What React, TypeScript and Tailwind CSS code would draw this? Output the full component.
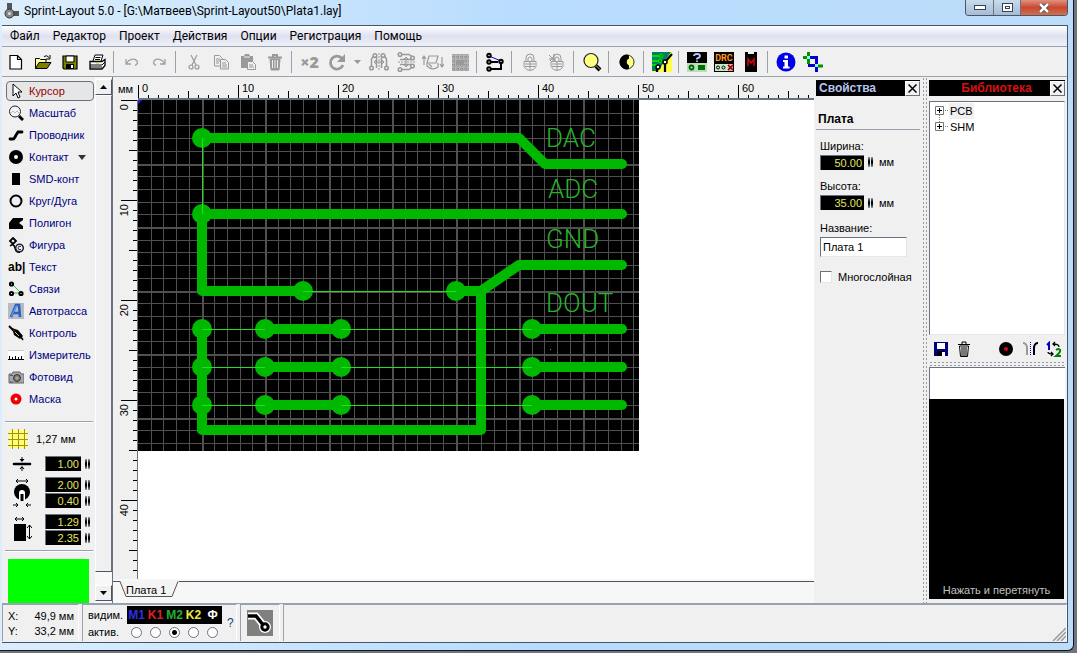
import { useState } from 'react'
import type { ReactNode } from 'react'

const MENU = ['Файл', 'Редактор', 'Проект', 'Действия', 'Опции', 'Регистрация', 'Помощь']

// Board geometry, 10px per millimetre
const GRID = 12.7
const BOARD_W = 501
const BOARD_H = 351

function Icon({ children, size = 22 }: { children: ReactNode; size?: number }) {
  return (
    <svg width={size} height={size} viewBox={`0 0 ${size} ${size}`} fill="none" className="block shrink-0" aria-hidden="true">
      {children}
    </svg>
  )
}

const mirrorPads = (
  <g stroke="#999">
    <path d="M3.500 15V8l2-3M8.500 5v12M18.500 15V8l-2-3M13.500 5v12" strokeWidth="1.500" />
    <path d="M11 2v18" strokeDasharray="2 1" />
    <path d="M7 11h8M8 9l-2 2 2 2M14 9l2 2-2 2" />
    <g strokeWidth="1.500" fill="#f0f0f0">
      <circle cx="7" cy="4.500" r="1.800" />
      <circle cx="15" cy="4.500" r="1.800" />
      <circle cx="3.500" cy="17" r="1.800" />
      <circle cx="18.500" cy="17" r="1.800" />
    </g>
  </g>
)

const lockShape = (
  <>
    <path d="M7 11V7a4 4 0 0 1 8 0v4M9 11V8a2 2 0 0 1 4 0v3" stroke="#999" />
    <path d="M5 10.500h12v5q-2 4-6 4t-6-4z" stroke="#999" />
    <path d="M6 13h10M6 15.500h10M11 11v8" stroke="#999" />
  </>
)

const ICONS: Record<string, ReactNode> = {
  new: <path d="M5 4.500h7.500l4 4v9.500H5z M12.500 4.500v4h4" fill="#fff" stroke="#000" strokeWidth="1.200" />,
  open: (
    <>
      <path d="M3.500 17.500v-10h4l1 1h5.500v3" fill="#ffff99" stroke="#000" />
      <path d="M3.500 17.500l3.500-6h12l-4 6z" fill="#808000" stroke="#000" />
      <path d="M12 5.500q3-2 5 1M18 4v4h-4" stroke="#000" />
    </>
  ),
  save: (
    <>
      <path d="M4 5h14v13H5l-1-1z" fill="#808000" stroke="#000" strokeWidth="1.200" />
      <path d="M7 5h8v6H7z" fill="#fff" stroke="#000" />
      <path d="M7 13h8v5H7z" fill="#000" />
      <path d="M12 14h2v3h-2z" fill="#fff" />
    </>
  ),
  print: (
    <>
      <path d="M7 10l2-6h8l-2 6" fill="#fff" stroke="#000" />
      <path d="M9.500 6.500h5M9 8.500h5" stroke="#000" />
      <path d="M4 10.500h12l3-2v6l-3 3.500H4z" fill="#fff" stroke="#000" strokeWidth="1.300" />
      <path d="M4 14h12l3-3M4 16h12" stroke="#000" />
      <path d="M10 12h3" stroke="#d0c000" />
    </>
  ),
  undo: <path d="M5 8v5h5M5.500 12.500c2-4 8-6 10.500-2.500c1 2 0 3.500-2 4.500" stroke="#a0a0a0" strokeWidth="1.300" />,
  redo: <path d="M17 8v5h-5M16.500 12.500c-2-4-8-6-10.500-2.500c-1 2 0 3.500 2 4.500" stroke="#a0a0a0" strokeWidth="1.300" />,
  cut: (
    <g stroke="#999" strokeWidth="1.200">
      <path d="M8 4l5 10M14 4L9 14" />
      <circle cx="8" cy="16" r="2" />
      <circle cx="14" cy="16" r="2" />
    </g>
  ),
  copy: (
    <g stroke="#999">
      <path d="M4.500 4.500h5l3 3v7.500h-8z" />
      <path d="M10.500 8.500h5l3 3v6.500h-8z" fill="#f0f0f0" />
      <path d="M6 8h4M6 10h4M6 12h3M12 12h4M12 14h5M12 16h5" />
    </g>
  ),
  paste: (
    <>
      <path d="M4 5h3l1-2h4l1 2h3v12H4z" fill="#999" />
      <path d="M7 6h6" stroke="#f0f0f0" />
      <path d="M10.500 10.500h5l3 3v5h-8z" fill="#f0f0f0" stroke="#999" />
      <path d="M12 14h4M12 16h5" stroke="#999" />
    </>
  ),
  trash: (
    <g stroke="#999">
      <path d="M4 6.500h14M9 6V4h4v2" strokeWidth="2" />
      <path d="M6 8h10l-1 11H7z" fill="#999" />
      <path d="M8.500 9v8M11 9v8M13.500 9v8" stroke="#eee" />
    </g>
  ),
  rotate: (
    <>
      <path d="M16 7.500A6.500 6.500 0 1 0 17 14" stroke="#999" strokeWidth="2.800" />
      <path d="M19 3v8h-8z" fill="#999" />
    </>
  ),
  mirrorH: mirrorPads,
  mirrorV: <g transform="rotate(90 11 11)">{mirrorPads}</g>,
  flip: (
    <g stroke="#999" strokeWidth="1.200">
      <path d="M7 5h9l-2 7H5zM5 12v3q5 5 11 1v-4" />
      <path d="M2 14V5M0 8l2-3 2 3M20 6v9M18 13l2 3 2-3M7 13l3 3" />
    </g>
  ),
  ground: (
    <>
      <path d="M3 3h17v17H3z" fill="#b4b4b4" />
      <path d="M5 3v17M9 3v17M13 3v17M17 3v17M3 6h17M3 10h17M3 14h17M3 18h17" stroke="#858585" strokeDasharray="1 1" />
      <path d="M7 9h8v5H7z" fill="#999" />
    </>
  ),
  nodes: (
    <>
      <path d="M5 5l12 5" stroke="#0000d0" />
      <path d="M5 11h9M17 10v8H7" stroke="#000" strokeWidth="2" />
      <g fill="#fff" stroke="#000" strokeWidth="2">
        <circle cx="5" cy="4.500" r="1.700" />
        <circle cx="5" cy="11" r="1.700" />
        <circle cx="5" cy="18" r="1.700" />
        <circle cx="17" cy="10.500" r="1.700" />
      </g>
    </>
  ),
  lock: lockShape,
  unlock: (
    <>
      {lockShape}
      <path d="M3 4l6 6M8 3v6M3 8h6M9 4L4 10" stroke="#999" />
    </>
  ),
  search: (
    <>
      <circle cx="10" cy="9.500" r="7" fill="#ffff80" stroke="#222" strokeWidth="1.200" />
      <path d="M15 15l4 4" stroke="#000" strokeWidth="4" />
      <path d="M15.500 15l3.500 3.500" stroke="#b0b070" />
    </>
  ),
  contrast: (
    <>
      <circle cx="11" cy="11" r="7" fill="#ffff80" stroke="#333" />
      <path d="M11 3.500a7.500 7.500 0 0 0 0 15l2-1v-3a3.800 3.800 0 0 1 0-7v-3z" fill="#000" />
    </>
  ),
  photo: (
    <>
      <path d="M1 1h20v20H1z" fill="#ffff40" />
      <path d="M1 1h19L7 20H1z" fill="#008060" />
      <path d="M1 5h8M1 10h8M1 14h5" stroke="#00e000" strokeWidth="2" />
      <circle cx="10" cy="5" r="1.800" fill="#00a000" stroke="#00e000" />
      <circle cx="9" cy="10" r="1.800" fill="#00a000" stroke="#00e000" />
      <path d="M21 3l-7 8v10M6 21v-4" stroke="#000" strokeWidth="2.200" />
      <circle cx="7" cy="16" r="2" fill="#fff" stroke="#000" strokeWidth="1.500" />
      <circle cx="14" cy="11" r="2" fill="#fff" stroke="#000" strokeWidth="1.500" />
    </>
  ),
  help: (
    <>
      <path d="M1 1h20v20H1z" fill="#b8e0b8" />
      <path d="M1 1h20v11H1z" fill="#000" />
      <path d="M8 5q0-2 3-2t3 2q0 1.500-3 2.500v1M11 9.500v1.500" stroke="#b8c8ff" strokeWidth="1.800" />
      <circle cx="5.500" cy="16.500" r="2" stroke="#006000" strokeWidth="1.800" />
      <path d="M12 14h7v5h-7z" fill="#007000" />
    </>
  ),
  mask: (
    <>
      <path d="M5 1h3v2h6V1h3v20H5z" fill="#000" />
      <path d="M8 15V8l3 4 3-4v7" stroke="#e00000" strokeWidth="1.500" />
    </>
  ),
  info: (
    <>
      <circle cx="11" cy="11" r="9.500" fill="#0000e8" />
      <path d="M9.500 4.500h3.500v3H9.500zM8 9h5v6.500h1.500V17.500H8V15.500h1.500V11H8z" fill="#fff" />
    </>
  ),
  crop: (
    <>
      <path d="M6.500 1v12M1 6.500h5" stroke="#009000" strokeWidth="3" />
      <path d="M14 15h7" stroke="#009000" strokeWidth="3" />
      <path d="M8 6.500h6.500V13M6 14.500h7M14.500 15v6" stroke="#0000d0" strokeWidth="3" />
      <path d="M5 5h3v3H5zM13 13h3v3h-3z" fill="#80ffff" />
    </>
  ),
}

function DrcIcon() {
  return (
    <svg width="20" height="20" viewBox="0 0 20 20" aria-hidden="true">
      <path d="M0 0h20v20H0z" fill="#000" />
      <path d="M1 12h13v7H1z" fill="#c8e8c8" />
      <path d="M14 12h5v7h-5z" fill="#e8a0a0" />
      <circle cx="4" cy="15.500" r="1.500" fill="none" stroke="#000" />
      <circle cx="9.500" cy="15.500" r="1.500" fill="none" stroke="#000" />
      <path d="M14 13l5 5M19 13l-5 5" stroke="#900000" strokeWidth="1.500" />
      <text x="10" y="9" textAnchor="middle" fontSize="9" fontWeight="bold" fill="#ff9820" fontFamily="Roboto, sans-serif">DRC</text>
    </svg>
  )
}

const TOOLBAR: { id: string; label: string }[][] = [
  [
    { id: 'new', label: 'Новый' },
    { id: 'open', label: 'Открыть' },
    { id: 'save', label: 'Сохранить' },
    { id: 'print', label: 'Печать' },
  ],
  [
    { id: 'undo', label: 'Отменить' },
    { id: 'redo', label: 'Повторить' },
  ],
  [
    { id: 'cut', label: 'Вырезать' },
    { id: 'copy', label: 'Копировать' },
    { id: 'paste', label: 'Вставить' },
    { id: 'trash', label: 'Удалить' },
  ],
  [
    { id: 'x2', label: 'Дублировать' },
    { id: 'rotate', label: 'Повернуть' },
    { id: 'arrow', label: 'Угол поворота' },
    { id: 'mirrorH', label: 'Отразить по горизонтали' },
    { id: 'mirrorV', label: 'Отразить по вертикали' },
    { id: 'flip', label: 'Сменить сторону' },
    { id: 'ground', label: 'Металлизация' },
  ],
  [{ id: 'nodes', label: 'Соединения' }],
  [
    { id: 'lock', label: 'Группировать' },
    { id: 'unlock', label: 'Разгруппировать' },
  ],
  [{ id: 'search', label: 'Поиск' }],
  [{ id: 'contrast', label: 'Контраст' }],
  [{ id: 'photo', label: 'Слои' }],
  [
    { id: 'help', label: 'Свойства' },
    { id: 'drc', label: 'Проверка' },
    { id: 'mask', label: 'Макросы' },
  ],
  [
    { id: 'info', label: 'О программе' },
    { id: 'crop', label: 'Обрезка' },
  ],
]

function ToolbarButton({ id, label }: { id: string; label: string }) {
  if (id === 'arrow') {
    return (
      <button aria-label={label} className="flex h-7 w-[15px] items-center justify-center">
        <svg width="7" height="4" viewBox="0 0 7 4" aria-hidden="true">
          <path d="M0 0h7L3.500 4z" fill="#999" />
        </svg>
      </button>
    )
  }
  return (
    <button aria-label={label} className="flex h-7 w-[27px] items-center justify-center">
      {id === 'x2' && <span className="font-['Open_Sans',sans-serif] text-base font-extrabold text-[#999]">×2</span>}
      {id === 'drc' && <DrcIcon />}
      {ICONS[id] && <Icon>{ICONS[id]}</Icon>}
    </button>
  )
}

const TOOLS: { label: string; icon: ReactNode }[] = [
  { label: 'Курсор', icon: <path d="M5 1v12l3-3 2 5 2-1-2-5h4z" fill="#fff" stroke="#000" /> },
  {
    label: 'Масштаб',
    icon: (
      <>
        <circle cx="7" cy="6.500" r="5.500" fill="#f4f4f4" stroke="#222" />
        <path d="M3 8l2-2 2 2 2-2 2 2" stroke="#bbb" />
        <path d="M11 11l4 4" stroke="#000" strokeWidth="3" />
      </>
    ),
  },
  { label: 'Проводник', icon: <path d="M2 12h3q1 0 2-2t3-5h4" stroke="#000" strokeWidth="2.800" strokeLinecap="round" /> },
  { label: 'Контакт', icon: <circle cx="8" cy="8" r="4.500" stroke="#000" strokeWidth="5" fill="#fff" /> },
  { label: 'SMD-конт', icon: <path d="M4 2h8v12H4z" fill="#000" /> },
  { label: 'Круг/Дуга', icon: <circle cx="8" cy="8" r="5.500" stroke="#000" strokeWidth="2" /> },
  { label: 'Полигон', icon: <path d="M5 3h10v2l-4 3 4 3v3H1V8z" fill="#000" /> },
  {
    label: 'Фигура',
    icon: (
      <>
        <path d="M5 1l3 3-3 3-3-3z" stroke="#000" strokeWidth="1.800" />
        <path d="M2 9q4-3 5 2t5 4" stroke="#000" strokeWidth="1.500" />
        <circle cx="11.500" cy="11" r="3.800" stroke="#223" strokeWidth="1.500" />
        <path d="M13 9.500q-3-1-3 1.500t3 1.500" stroke="#335" />
      </>
    ),
  },
  { label: 'Текст', icon: null },
  {
    label: 'Связи',
    icon: (
      <>
        <path d="M4 3l9 9H4" stroke="#30c050" />
        <g fill="#fff" stroke="#000" strokeWidth="2">
          <circle cx="3.500" cy="3" r="1.600" />
          <circle cx="3.500" cy="12.500" r="1.600" />
          <circle cx="13" cy="12.500" r="1.600" />
        </g>
      </>
    ),
  },
  {
    label: 'Автотрасса',
    icon: (
      <>
        <path d="M0 0h16v16H0z" fill="#b4bac6" />
        <path d="M3 14L8 2h3l1 12M5 10h7" stroke="#2a62c0" strokeWidth="2.600" />
        <path d="M3.500 13L8.500 2.500" stroke="#70a8f0" />
      </>
    ),
  },
  {
    label: 'Контроль',
    icon: (
      <>
        <path d="M1 1l5 5" stroke="#000" strokeWidth="2" />
        <path d="M4 3l6 2 5 6-3 3-6-4z" fill="#000" />
        <path d="M7 7l4 4" stroke="#b0d0b0" />
        <path d="M5 5l2 1" stroke="#c00000" />
        <path d="M13 12l2 3" stroke="#000" strokeWidth="1.500" />
      </>
    ),
  },
  {
    label: 'Измеритель',
    icon: (
      <>
        <path d="M0 3h16v10H0z" fill="#fff" />
        <path d="M0 3.500h16" stroke="#ccc" />
        <path d="M0 12.500h16M1.500 9v3M4.500 10v2M7.500 9v3M10.500 10v2M13.500 9v3" stroke="#000" />
      </>
    ),
  },
  {
    label: 'Фотовид',
    icon: (
      <>
        <path d="M1 5h3l1-2h7l1 2h3v9H1z" fill="#a8a8b0" stroke="#666" />
        <circle cx="9" cy="9" r="3.500" fill="#787888" stroke="#333" />
        <circle cx="9" cy="9" r="1.500" fill="#c8a060" />
        <path d="M2 6.500h3M2 13h3" stroke="#555" />
      </>
    ),
  },
  { label: 'Маска', icon: <circle cx="8" cy="8" r="3.500" stroke="#f00000" strokeWidth="4" fill="#fff" /> },
]

function Spinner() {
  return (
    <span className="flex gap-px" aria-hidden="true">
      <span className="h-[10px] w-[2px] bg-linear-to-b from-gray-400 via-black to-gray-400" />
      <span className="h-[10px] w-[2px] bg-linear-to-b from-gray-400 via-black to-gray-400" />
    </span>
  )
}

function NumberField({ id, label, value, wide = false }: { id: string; label?: string; value: string; wide?: boolean }) {
  return (
    <div className="flex items-center gap-1">
      <input
        id={id}
        aria-label={label}
        defaultValue={value}
        className={`${wide ? 'w-11' : 'w-9'} h-[15px] rounded-none border-t border-l border-gray-500 bg-black pr-[2px] text-right text-[11px] leading-3 text-[#e4e460] outline-none`}
      />
      <Spinner />
    </div>
  )
}

function Rule() {
  return <div className="mr-[2px] ml-[3px] border-t border-b border-t-gray-400 border-b-white" />
}

function ToolPanel() {
  const [active, setActive] = useState('Курсор')
  return (
    <nav className="flex w-[93px] shrink-0 flex-col pt-[3px]" aria-label="Инструменты">
      {TOOLS.map(({ label, icon }) => (
        <button
          key={label}
          onClick={() => setActive(label)}
          className={`my-px ml-1 flex h-5 w-[88px] shrink-0 items-center gap-[5px] rounded-sm border pl-px text-left whitespace-nowrap ${
            active === label ? 'border-gray-500 bg-[#e6e6e6] text-[#900000]' : 'border-transparent text-[#000080]'
          }`}
        >
          {icon ? (
            <Icon size={16}>{icon}</Icon>
          ) : (
            <span className="w-4 shrink-0 text-xs font-bold text-black" aria-hidden="true">ab|</span>
          )}
          <span>{label}</span>
          {label === 'Контакт' && (
            <svg width="8" height="5" viewBox="0 0 8 5" className="ml-1" aria-hidden="true">
              <path d="M0 0h8L4 5z" fill="#333" />
            </svg>
          )}
        </button>
      ))}
      <div className="h-[11px]" />
      <Rule />
      <button className="mt-[5px] ml-1 flex h-[22px] items-center gap-2 pl-[2px]">
        <svg width="20" height="20" viewBox="0 0 20 20" aria-hidden="true">
          <path d="M1 1h18v18H1z" fill="#ffff70" />
          <path d="M4.500 0v20M10.500 0v20M16.500 0v20M0 4.500h20M0 10.500h20M0 16.500h20" stroke="#a09020" />
        </svg>
        <span>1,27 мм</span>
      </button>
      <div className="mt-[6px] flex flex-col gap-[6px] pl-[10px]">
        <div className="flex items-center gap-[13px]">
          <svg width="20" height="14" viewBox="0 0 20 14" aria-hidden="true">
            <path d="M2 7h16" stroke="#000" strokeWidth="2.600" strokeLinecap="round" />
            <path d="M7.500 2h5L10 5zM7.500 12h5L10 9zM9.500 0h1v3h-1zM9.500 11h1v3h-1z" fill="#000" />
          </svg>
          <NumberField id="track" label="Ширина дорожки" value="1.00" />
        </div>
        <div className="flex items-center gap-[13px]">
          <svg width="20" height="30" viewBox="0 0 20 30" aria-hidden="true">
            <path d="M4 3h12M6 1L4 3l2 2M14 1l2 2-2 2M1 27h5M4 25l2 2-2 2M19 27h-5M16 25l-2 2 2 2" stroke="#000" fill="none" />
            <circle cx="10" cy="14" r="8" fill="#000" />
            <path d="M7 23v-8a3 3 0 1 1 6 0v8z" fill="#fff" />
            <path d="M8.500 23v-7h3v7z" fill="#000" />
          </svg>
          <div className="flex flex-col gap-px">
            <NumberField id="pad" label="Диаметр контакта" value="2.00" />
            <NumberField id="hole" label="Диаметр отверстия" value="0.40" />
          </div>
        </div>
        <div className="flex items-center gap-[13px]">
          <svg width="20" height="28" viewBox="0 0 20 28" aria-hidden="true">
            <path d="M3 3h9M5 1L3 3l2 2M10 1l2 2-2 2M17.500 9v14M15 12l2.500-3 2.500 3M15 20l2.500 3 2.500-3" stroke="#000" fill="none" />
            <path d="M2 8h12v17H2z" fill="#000" />
          </svg>
          <div className="flex flex-col gap-px">
            <NumberField id="smdw" label="Ширина SMD" value="1.29" />
            <NumberField id="smdh" label="Высота SMD" value="2.35" />
          </div>
        </div>
      </div>
      <div className="h-[5px]" />
      <Rule />
      <div className="mt-[7px] ml-[6px] h-11 w-[81px] bg-[#00ff00]" />
    </nav>
  )
}

function ScrollColumn() {
  const button = 'flex h-4 w-full items-center justify-center border border-t-white border-l-white border-r-gray-600 border-b-gray-600 bg-[#f0f0f0]'
  return (
    <div className="flex w-[17px] shrink-0 flex-col bg-[#f8f8f8] pt-[2px] pb-[2px]">
      <button aria-label="Вверх" className={button}>
        <svg width="7" height="4" viewBox="0 0 7 4" aria-hidden="true"><path d="M0 4h7L3.500 0z" fill="#000" /></svg>
      </button>
      <div className="grow border border-t-white border-l-white border-r-gray-500 border-b-gray-600 bg-[#f0f0f0]" />
      <div className="h-[13px]" />
      <button aria-label="Вниз" className={button}>
        <svg width="7" height="4" viewBox="0 0 7 4" aria-hidden="true"><path d="M0 0h7L3.500 4z" fill="#000" /></svg>
      </button>
    </div>
  )
}

const marks = (count: number) => Array.from({ length: count }, (_, i) => i)
const tick = (i: number, sizes: number[]) => (i % 10 === 0 ? sizes[0] : i % 5 === 0 ? sizes[1] : sizes[2])

function RulerTop() {
  return (
    <svg className="block h-[21px] w-full" shapeRendering="crispEdges" aria-hidden="true">
      {marks(200).map((i) => (
        <path key={i} d={`M${i * 10 + 0.5} 21v-${tick(i, [13, 7, 3])}`} stroke="#000" />
      ))}
      {marks(7).map((i) => (
        <text key={i} x={i * 100 + 4} y="15" fontSize="11" fill="#000">{i * 10}</text>
      ))}
    </svg>
  )
}

function RulerLeft() {
  return (
    <svg className="block h-full w-6" shapeRendering="crispEdges" aria-hidden="true">
      {marks(200).map((i) => (
        <path key={i} d={`M24 ${i * 10 + 0.5}h-${tick(i, [16, 8, 4])}`} stroke="#000" />
      ))}
      {marks(5).map((i) => (
        <text key={i} fontSize="11" fill="#000" textAnchor="end" transform={`translate(15 ${i * 100 + 4}) rotate(-90)`}>{i * 10}</text>
      ))}
    </svg>
  )
}

const PADS = [
  [64, 38], [64, 114], [165, 191], [318, 191],
  [64, 229], [127, 229], [203, 229], [394, 229],
  [64, 267], [127, 267], [203, 267], [394, 267],
  [64, 305], [127, 305], [203, 305], [394, 305],
]

function Board() {
  return (
    <svg width={BOARD_W} height={BOARD_H} viewBox={`0 0 ${BOARD_W} ${BOARD_H}`} className="block" role="img" aria-label="Печатная плата">
      <rect width={BOARD_W} height={BOARD_H} fill="#000" />
      <g stroke="#505050" shapeRendering="crispEdges">
        {marks(40).slice(1).map((i) => (
          <path key={i} d={`M${Math.round(i * GRID) + 0.5} 0V${BOARD_H}`} strokeWidth={i % 5 === 0 ? 2 : 1} />
        ))}
        {marks(28).slice(1).map((i) => (
          <path key={i} d={`M0 ${Math.round(i * GRID) + 0.5}H${BOARD_W}`} strokeWidth={i % 5 === 0 ? 2 : 1} />
        ))}
      </g>
      <path d="M0 0h4L0 4z" fill="#2020ff" />
      <g stroke="#00b800" strokeWidth="10" fill="none" strokeLinecap="round" strokeLinejoin="round">
        <path d="M64 38H381L407 64H484" />
        <path d="M484 114H64V191H165" />
        <path d="M318 191H343L381 165H484" />
        <path d="M343 191V330H64V229" />
        {[229, 267, 305].map((y) => (
          <path key={y} d={`M127 ${y}H203M394 ${y}H484`} />
        ))}
      </g>
      {PADS.map(([x, y]) => (
        <circle key={`${x}-${y}`} cx={x} cy={y} r="10" fill="#00b800" />
      ))}
      {/* Unrouted connections */}
      <g fill="#20e020" shapeRendering="crispEdges">
        <rect x="64" y="38" width="1" height="76" />
        <rect x="165" y="191" width="153" height="1" />
        {[229, 267, 305].map((y) => (
          <path key={y} d={`M64 ${y}h63v1h-63zM203 ${y}h191v1h-191z`} />
        ))}
      </g>
      <g fill="#28b028" fontFamily="Roboto, sans-serif" fontWeight="300" fontSize="26">
        <text x="408" y="47">DAC</text>
        <text x="410" y="98">ADC</text>
        <text x="408" y="148">GND</text>
        <text x="408" y="212">DOUT</text>
      </g>
      <path d="M412 249h1v1h-1z" fill="#808080" />
    </svg>
  )
}

function Workspace() {
  return (
    <main className="flex min-w-0 grow flex-col border-l border-gray-500">
      <div className="grid min-h-0 grow grid-cols-[25px_1fr] grid-rows-[23px_1fr]">
        <span className="self-center pl-[5px] leading-3">мм</span>
        <div className="min-w-0 overflow-hidden border-b-2 border-gray-500">
          <RulerTop />
        </div>
        <div className="min-h-0 overflow-hidden border-r border-gray-500">
          <RulerLeft />
        </div>
        <div className="min-h-0 min-w-0 overflow-hidden bg-white">
          <Board />
        </div>
      </div>
      <div className="h-6 shrink-0 bg-[#f7f7f7] pt-[2px]">
        <div className="relative border-t border-gray-600">
          <svg width="64" height="17" viewBox="0 0 64 17" className="absolute -top-px left-1" aria-hidden="true">
            <path d="M3 0l7 15.500h45L62 0z" fill="#f4f4f4" />
            <path d="M3 .5l6 15h46l6-15" fill="none" stroke="#555" />
          </svg>
          <button className="absolute top-0 left-[13px] h-4 leading-4">Плата 1</button>
        </div>
      </div>
    </main>
  )
}

function CloseButton() {
  return (
    <button aria-label="Закрыть" className="flex size-[15px] items-center justify-center border border-t-white border-l-white border-r-gray-500 border-b-gray-500 bg-[#f0f0f0]">
      <svg width="9" height="9" viewBox="0 0 9 9" aria-hidden="true">
        <path d="M.5.5l8 8M8.500.5l-8 8" stroke="#000" strokeWidth="1.500" />
      </svg>
    </button>
  )
}

function Properties() {
  return (
    <aside className="flex w-[104px] shrink-0 flex-col pt-[3px]">
      <header className="flex h-4 items-center justify-between bg-black pl-[3px]">
        <h2 className="text-xs leading-4 font-bold text-[#b8c4f0]">Свойства</h2>
        <CloseButton />
      </header>
      <h3 className="mt-4 border-b border-gray-400 pb-[3px] pl-[2px] text-xs leading-[14px] font-bold">Плата</h3>
      <form className="flex flex-col pl-1" onSubmit={(e) => e.preventDefault()}>
        <label htmlFor="width" className="mt-[9px] leading-[14px]">Ширина:</label>
        <div className="mt-px flex items-center gap-[6px]">
          <NumberField id="width" value="50.00" wide />
          <span>мм</span>
        </div>
        <label htmlFor="height" className="mt-2 leading-[14px]">Высота:</label>
        <div className="mt-[2px] flex items-center gap-[6px]">
          <NumberField id="height" value="35.00" wide />
          <span>мм</span>
        </div>
        <label htmlFor="name" className="mt-[10px] leading-[14px]">Название:</label>
        <input
          id="name"
          defaultValue="Плата 1"
          className="mt-[2px] h-5 w-[87px] rounded-none border border-t-gray-500 border-l-gray-500 border-r-gray-200 border-b-gray-200 bg-white pl-[2px] outline-none"
        />
        <label className="mt-3 flex items-center gap-[6px] leading-4 whitespace-nowrap">
          <input type="checkbox" className="size-3 shrink-0 appearance-none border border-t-gray-500 border-l-gray-500 border-r-gray-200 border-b-gray-200 bg-white" />
          Многослойная
        </label>
      </form>
    </aside>
  )
}

function TreeItem({ name, selected = false }: { name: string; selected?: boolean }) {
  return (
    <li className="flex h-4 items-center">
      <svg width="14" height="16" viewBox="0 0 14 16" aria-hidden="true">
        <path d="M.5 3.500h8v8h-8z" fill="#fff" stroke="#777" />
        <path d="M2 7.500h5M4.500 5v5" stroke="#000" />
        <path d="M10 7.500h4" stroke="#888" strokeDasharray="1 1" />
        <path d={selected ? 'M4.500 12v4' : 'M4.500 0v3'} stroke="#888" strokeDasharray="1 1" />
      </svg>
      <button className={`px-px leading-4 ${selected ? 'bg-[#f0f0f0]' : ''}`}>{name}</button>
    </li>
  )
}

function Library() {
  return (
    <aside className="flex w-[136px] shrink-0 flex-col pt-[3px]">
      <header className="flex h-4 items-center bg-black">
        <h2 className="grow pl-[14px] text-center text-xs leading-4 font-bold text-[#d81010]">Библиотека</h2>
        <CloseButton />
      </header>
      <ul className="mt-[5px] h-[234px] border border-t-gray-500 border-l-gray-500 border-r-gray-200 border-b-gray-200 bg-white pt-px pl-[5px]">
        <TreeItem name="PCB" selected />
        <TreeItem name="SHM" />
      </ul>
      <div className="flex h-[26px] items-center justify-between pt-[2px] pr-[3px] pl-1">
        <div className="flex gap-[7px]">
          <button aria-label="Сохранить макрос">
            <Icon size={16}>
              <path d="M1 1h14v14H1z" fill="#000080" />
              <path d="M4 2h8v6H4z" fill="#fff" />
              <path d="M4 10h8v5H4z" fill="#000" />
              <path d="M9 11h3v4H9z" fill="#fff" />
            </Icon>
          </button>
          <button aria-label="Удалить макрос">
            <Icon size={16}>
              <path d="M2 3.500h12M6 3V1h4v2M3.500 5h9l-1 10.500h-7z" stroke="#000" />
              <path d="M6 6v9M8 6v9M10 6v9" stroke="#000" />
            </Icon>
          </button>
        </div>
        <div className="flex gap-2">
          <button aria-label="Контакты">
            <Icon size={16}>
              <circle cx="8" cy="8" r="7" fill="#000" />
              <circle cx="8" cy="8" r="2" fill="#e00020" />
            </Icon>
          </button>
          <button aria-label="Отразить">
            <Icon size={16}>
              <path d="M1 2q3 0 4 4v8" stroke="#999" strokeWidth="2" />
              <path d="M8.500 1v14" stroke="#0000c0" strokeDasharray="1 1" />
              <path d="M16 2q-3 0-4 4v8" stroke="#000" strokeWidth="2" />
            </Icon>
          </button>
          <button aria-label="Сменить слой">
            <Icon size={16}>
              <path d="M1 4l2-2v7" stroke="#0000c0" strokeWidth="2" />
              <path d="M10 9q3-2 4 0t-4 6h5" stroke="#008000" strokeWidth="2" />
              <path d="M13 6q0-3-6-3M9 1L7 3l2 2M2 11q0 2 5 2M5 11l2 2-2 2" stroke="#000" strokeWidth="1.300" />
            </Icon>
          </button>
        </div>
      </div>
      <div className="h-[5px] bg-[radial-gradient(#999_1px,transparent_1px)] bg-size-[4px_3px]" />
      <div className="mt-px h-8 border-t border-l border-gray-500 bg-white" />
      <div className="mr-px mb-1 flex grow items-end justify-center bg-black pb-[3px] leading-3 text-[#c0c0c0]">Нажать и перетянуть</div>
    </aside>
  )
}

const LAYERS = [
  { name: 'M1', color: 'text-[#3030e0]' },
  { name: 'K1', color: 'text-[#e02020]' },
  { name: 'M2', color: 'text-[#20b030]' },
  { name: 'K2', color: 'text-[#e8e840]' },
  { name: 'Ф', color: 'text-white' },
]

function StatusBar() {
  const [layer, setLayer] = useState('M2')
  const pane = 'border-t border-l border-t-gray-400 border-l-gray-400 border-r border-r-white'
  return (
    <footer className="flex h-[38px] shrink-0 gap-[3px] pb-px">
      <dl className={`${pane} grid w-[77px] grid-cols-[auto_1fr] content-center gap-y-px pt-px pr-1 pl-[5px] leading-[14px]`}>
        <dt>X:</dt>
        <dd className="text-right">49,9 мм</dd>
        <dt>Y:</dt>
        <dd className="text-right">33,2 мм</dd>
      </dl>
      <div className={`${pane} flex w-[155px] items-center gap-[5px] pl-[5px]`}>
        <div className="grid grid-cols-[39px_95px] grid-rows-[18px_16px] items-center">
          <span>видим.</span>
          <div className="grid h-[18px] grid-cols-5 items-center bg-black text-center text-xs font-bold">
            {LAYERS.map(({ name, color }) => (
              <button key={name} className={color}>{name}</button>
            ))}
          </div>
          <span>актив.</span>
          <div className="grid grid-cols-5 justify-items-center">
            {LAYERS.map(({ name }) => (
              <input
                key={name}
                type="radio"
                name="layer"
                aria-label={name}
                checked={layer === name}
                onChange={() => setLayer(name)}
                className="size-[11px] appearance-none rounded-full border border-gray-500 bg-white checked:bg-[radial-gradient(#000_2px,#fff_3px)]"
              />
            ))}
          </div>
        </div>
        <button className="text-xs text-[#224080]">?</button>
      </div>
      <div className={`${pane} flex w-10 items-center justify-center`}>
        <button aria-label="Режим трассировки" className="bg-[#808080]">
          <Icon size={26}>
            <path d="M1 6h8l8 10" stroke="#fff" strokeWidth="7" />
            <circle cx="18" cy="17" r="6" fill="#fff" />
            <path d="M1 6h8l8 10" stroke="#000" strokeWidth="3.500" />
            <circle cx="18" cy="17" r="3.200" fill="#fff" stroke="#000" strokeWidth="3" />
          </Icon>
        </button>
      </div>
      <div className={`${pane} flex grow items-end justify-end`}>
        <svg width="14" height="14" viewBox="0 0 14 14" aria-hidden="true">
          <path d="M1 14L14 1M5 14l9-9M9 14l5-5" stroke="#999" strokeWidth="1.500" />
        </svg>
      </div>
    </footer>
  )
}

function TitleBar() {
  return (
    <header className="flex h-[25px] shrink-0 justify-between">
      <div className="flex items-center gap-1 pb-[3px] pl-[2px]">
        <Icon size={16}>
          <path d="M3 0h5v8H3zM8 8h7v5H8z" fill="#555" />
          <circle cx="5.500" cy="10.500" r="4.500" fill="#888" stroke="#333" />
          <circle cx="5.500" cy="10.500" r="1.500" fill="#ddd" />
        </Icon>
        <h1 className="font-[Roboto,sans-serif] text-xs text-black">Sprint-Layout 5.0 - [G:\Матвеев\Sprint-Layout50\Plata1.lay]</h1>
      </div>
      <div className="flex h-4 overflow-hidden rounded-b border border-t-0 border-gray-600">
        <button aria-label="Свернуть" className="flex w-7 items-center justify-center border-r border-gray-500 bg-linear-to-b from-[#c8dcec] to-[#a4bcd4]">
          <span className="h-[5px] w-3 border border-gray-700 bg-white" />
        </button>
        <button aria-label="Развернуть" className="flex w-[27px] items-center justify-center border-r border-gray-500 bg-linear-to-b from-[#c8dcec] to-[#a4bcd4]">
          <span className="flex h-[9px] w-[11px] items-center justify-center border border-gray-700 bg-white">
            <span className="h-[3px] w-[5px] border border-gray-700" />
          </span>
        </button>
        <button aria-label="Закрыть окно" className="flex w-[46px] items-center justify-center bg-linear-to-b from-[#e09080] via-[#c84830] to-[#d07050]">
          <svg width="12" height="10" viewBox="0 0 12 10" aria-hidden="true">
            <path d="M2 1l8 8M10 1L2 9" stroke="#444" strokeWidth="4" />
            <path d="M2 1l8 8M10 1L2 9" stroke="#fff" strokeWidth="2.500" />
          </svg>
        </button>
      </div>
    </header>
  )
}

export default function App() {
  return (
    <div className="h-screen min-h-[653px] bg-[#70757c] pr-[3px] pb-[2px] font-['Liberation_Sans',sans-serif] text-[11px] text-black">
      <div className="flex h-full flex-col rounded-br-md border-r border-b border-slate-900 bg-linear-to-r from-[#dceefc] via-[#b8dcfe] to-[#bcdcf8] pr-[5px] pb-[7px] pl-[2px]">
        <TitleBar />
        <div className="flex min-h-0 grow flex-col border-t border-r border-b border-slate-600 bg-[#f0f0f0]">
          <nav className="flex h-[21px] shrink-0 items-center gap-[13px] border-b border-gray-400 bg-linear-to-b from-white via-[#dfe1f0] to-[#eef0f8] pl-2 font-[Roboto,sans-serif] text-xs">
            {MENU.map((item) => (
              <button key={item}>{item}</button>
            ))}
          </nav>
          <div className="flex h-[30px] shrink-0 items-center border-b border-gray-400" role="toolbar">
            {TOOLBAR.map((group, i) => (
              <div key={i} className="flex items-center">
                {i > 0 && <span className="mr-1 ml-[3px] h-[22px] w-px bg-gray-400" />}
                {group.map((item) => (
                  <ToolbarButton key={item.id} {...item} />
                ))}
              </div>
            ))}
          </div>
          <div className="flex min-h-0 grow border-b border-gray-400 pr-[2px]">
            <ToolPanel />
            <ScrollColumn />
            <Workspace />
            <div className="w-[2px] shrink-0" />
            <Properties />
            <div className="mx-[2px] w-[5px] shrink-0 bg-[radial-gradient(#999_1px,transparent_1px)] bg-size-[3px_4px]" />
            <Library />
          </div>
          <StatusBar />
        </div>
      </div>
    </div>
  )
}
